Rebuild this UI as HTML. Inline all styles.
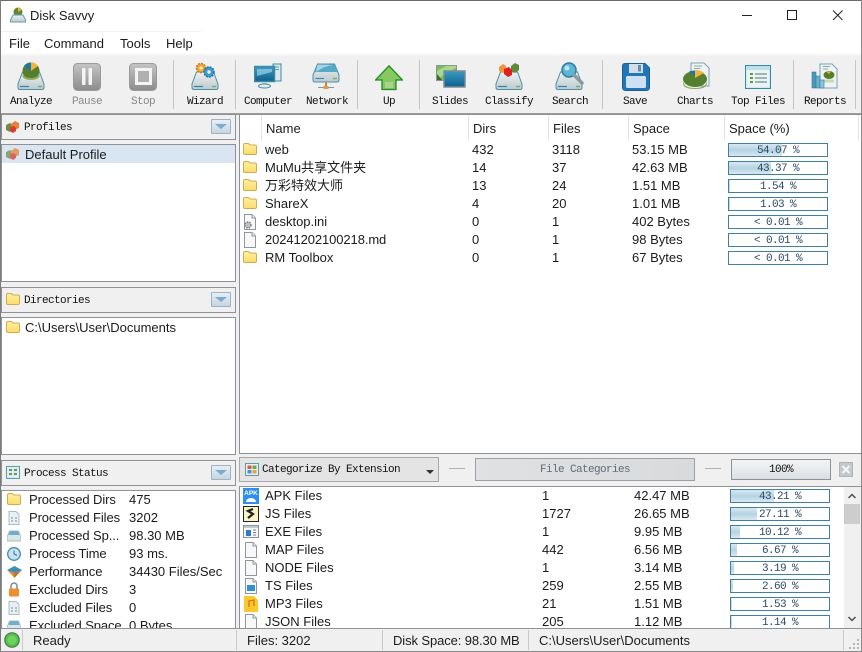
<!DOCTYPE html>
<html><head><meta charset="utf-8"><style>
html,body{margin:0;padding:0;width:862px;height:652px;overflow:hidden;background:#f0f0f0}
body{position:relative;font:13px/18px "Liberation Sans","Noto Sans CJK SC",sans-serif;color:#1b1b1b}
div,span,svg{position:absolute;box-sizing:border-box}
.t{white-space:nowrap}
.m{font-family:"Liberation Mono","IPAGothic",monospace;font-size:11px;letter-spacing:-.6px;white-space:nowrap;color:#111}
.tb{top:95px;width:80px;text-align:center;line-height:14px}
.dis{color:#888}
.sep{top:60px;width:1px;height:49px;background:#c6c6c6}
.box{background:#fff;border:1px solid #8e9296}
.hd{background:#f0f0f0;border:1px solid #8e9296}
.dd{width:20px;height:15px;border:1px solid #9db3c4;background:linear-gradient(#e8eef3,#c5d5e2);border-radius:1px}
.dd:after{content:"";position:absolute;left:3px;top:4px;border:6px solid transparent;border-top:5px solid #7dabd0;border-bottom:0}
.hs{top:115px;width:1px;height:26px;background:#e4e4e4}
.bar{width:100px;height:14px;border:1px solid #3f7f9f;background:#fff;overflow:hidden}
.bar i{position:absolute;left:0;top:0;bottom:0;background:linear-gradient(#d8e8f1,#b5d3e3 50%,#d8e8f1);display:block}
.bar b{position:absolute;left:0;right:0;top:1px;text-align:center;font:normal 11px/12px "Liberation Mono",monospace;letter-spacing:-.6px;color:#2c4a63}
.ss{top:630px;width:1px;height:20px;background:#c8c8c8}
.n{letter-spacing:-.1px}
</style></head><body>
<svg width="0" height="0" style="left:0;top:0">
<defs>
<linearGradient id="dg" x1="0" y1="0" x2="0" y2="1"><stop offset="0" stop-color="#eef2f3"/><stop offset="1" stop-color="#bcc9ce"/></linearGradient>
<linearGradient id="bl" x1="0" y1="0" x2="0" y2="1"><stop offset="0" stop-color="#3a9cc4"/><stop offset="1" stop-color="#0f5f8c"/></linearGradient>
<linearGradient id="gy" x1="0" y1="0" x2="0" y2="1"><stop offset="0" stop-color="#c4c4c4"/><stop offset="1" stop-color="#8c8c8c"/></linearGradient>
<linearGradient id="fg" x1="0" y1="0" x2="0" y2="1"><stop offset="0" stop-color="#fff0a0"/><stop offset="1" stop-color="#fbdc6c"/></linearGradient>
<symbol id="disk" viewBox="0 0 28 28"><path d="M5.500 10H22.500L27 22v3.500q0 2-2 2H3q-2 0-2-2V22Z" fill="url(#dg)" stroke="#4d8ea6"/><path d="M3 24.500H12" stroke="#2d87ad" stroke-width="1.200"/><path d="M21 24.500h4" stroke="#80b060" stroke-width="1.500"/></symbol>
<symbol id="fold" viewBox="0 0 14 12"><path d="M.5 2Q.5 .5 2 .5H5.500L7 2H12Q13.500 2 13.500 3.500V10Q13.500 11.500 12 11.500H2Q.5 11.500.5 10Z" fill="url(#fg)" stroke="#d4aa50"/></symbol>
<symbol id="page" viewBox="0 0 14 16"><path d="M1.500.500H9L12.500 4V15.500H1.500Z" fill="#f8f8f8" stroke="#8f979c"/><path d="M9 .5V4H12.500" fill="#e6e6e6" stroke="#8f979c"/></symbol>
<symbol id="cube" viewBox="0 0 16 14"><path d="M1 5L5 3L8 5V10L5 12L1 10Z" fill="#6d8f45"/><path d="M6 4L10 1L14 3V8L10 10L6 8Z" fill="#e8813a"/><path d="M5 7L9 6L11 8V11L8 13L5 11Z" fill="#d83a34"/></symbol>
</defs></svg>

<!-- window frame -->
<div style="left:0;top:0;width:862px;height:55px;background:#fff"></div>
<div style="left:0;top:0;width:862px;height:1px;background:#6a6a6a"></div>
<div style="left:0;top:0;width:1px;height:652px;background:#7a7a7a"></div>
<div style="left:861px;top:0;width:1px;height:652px;background:#8a8a8a"></div>
<div style="left:0;top:651px;width:862px;height:1px;background:#8a8a8a"></div>
<div style="left:1px;top:31px;width:200px;height:1px;background:#f0f0f0"></div>
<div style="left:1px;top:54px;width:860px;height:2px;background:#f4f4f4"></div>

<!-- title -->
<svg style="left:10px;top:7px" width="16" height="16" viewBox="0 0 16 16"><circle cx="8" cy="5" r="4.500" fill="#5c8a32"/><path d="M8 5V.8A4 4 0 0 1 11.500 3Z" fill="#f0b030"/><path d="M3 8H13L15.500 13V15H.5V13Z" fill="url(#dg)" stroke="#6b9bad"/></svg>
<div class="t" style="left:30px;top:7px">Disk Savvy</div>
<svg style="left:735px;top:5px" width="120" height="20" viewBox="0 0 120 20" fill="none" stroke="#222"><path d="M7 10.500H17"/><rect x="52.500" y="5.500" width="9" height="9"/><path d="M98 5.500L107.500 15M107.500 5.500L98 15"/></svg>

<!-- menu -->
<div class="t" style="left:9px;top:35px">File</div>
<div class="t" style="left:44px;top:35px">Command</div>
<div class="t" style="left:120px;top:35px">Tools</div>
<div class="t" style="left:166px;top:35px">Help</div>

<!-- toolbar -->
<div style="left:1px;top:113px;width:860px;height:2px;background:#9c9c9c"></div>
<div class="sep" style="left:173px"></div><div class="sep" style="left:235px"></div><div class="sep" style="left:357px"></div><div class="sep" style="left:419px"></div><div class="sep" style="left:602px"></div><div class="sep" style="left:793px"></div><div class="sep" style="left:855px"></div>

<svg style="left:17px;top:62px" width="28" height="28"><use href="#disk"/><circle cx="14" cy="9" r="8.500" fill="#557f2e"/><path d="M14 9L7 4A8.500 8.500 0 0 1 14 .5Z" fill="#1f77a8"/><path d="M14 9V.5A8.500 8.500 0 0 1 21 4Z" fill="#f4b33a"/><path d="M5.500 11a8.500 5 0 0 0 17 0v3a8.500 4 0 0 1-17 0Z" fill="#8fae5a"/></svg>
<svg style="left:73px;top:63px" width="28" height="28"><rect x=".5" y=".5" width="27" height="27" rx="4" fill="url(#gy)" stroke="#9a9a9a"/><rect x="9" y="5" width="3.500" height="17" rx="1" fill="#f4f4f4"/><rect x="15.500" y="5" width="3.500" height="17" rx="1" fill="#f4f4f4"/></svg>
<svg style="left:129px;top:63px" width="28" height="28"><rect x=".5" y=".5" width="27" height="27" rx="4" fill="url(#gy)" stroke="#9a9a9a"/><rect x="7.500" y="6.500" width="14" height="14" fill="#b0b0b0" stroke="#f4f4f4" stroke-width="3"/></svg>
<svg style="left:191px;top:62px" width="28" height="28"><use href="#disk"/><circle cx="10" cy="6" r="4.500" fill="#f4a630" stroke="#d07a10" stroke-width="1.500" stroke-dasharray="2 1"/><circle cx="10" cy="6" r="1.500" fill="#fff"/><circle cx="18" cy="10" r="5" fill="#3f9cc8" stroke="#1f6f9f" stroke-width="1.500" stroke-dasharray="2 1"/><circle cx="18" cy="10" r="1.700" fill="#e8f4fa"/></svg>
<svg style="left:254px;top:63px" width="28" height="26"><rect x="19" y="1" width="8" height="17" fill="#dce8ec" stroke="#3d8aa5"/><path d="M21 4h4M21 6.500h4" stroke="#5aa0b8"/><rect x=".5" y="3.500" width="20" height="15" fill="url(#bl)" stroke="#3d8aa5" stroke-width="1.500"/><path d="M3 6H18V9L3 13Z" fill="#9cd2e6" opacity=".7"/><path d="M8 19H13V22H8Z" fill="#b8d4dc"/><ellipse cx="10.500" cy="23" rx="6" ry="2" fill="#e3eef1" stroke="#3d8aa5"/></svg>
<svg style="left:312px;top:63px" width="28" height="28"><path d="M5.500 1H22.500L27 12V17Q27 19 25 19H3Q1 19 1 17V12Z" fill="url(#dg)" stroke="#4d8ea6"/><path d="M5.500 1.500H22.500L25.500 9H2.500Z" fill="#58a9c9"/><path d="M4 9Q12 3 21 2L5.500 1.500Z" fill="#a6d4e4"/><path d="M3.500 15.500H12" stroke="#2d87ad"/><path d="M21 15.500h4" stroke="#80b060" stroke-width="1.500"/><path d="M14 19V24" stroke="#d08830" stroke-width="2"/><path d="M6 24.500H22" stroke="#5aa0b8"/><rect x="11.500" y="23" width="5" height="3" fill="#e89a3a"/></svg>
<svg style="left:375px;top:65px" width="28" height="26"><path d="M14 .8L27.500 15H21V24.500H7V15H.5Z" fill="#86c862" stroke="#1f8a1f" stroke-width="1.300"/><rect x="10" y="17" width="8" height="6" fill="#a9d48c"/></svg>
<svg style="left:436px;top:65px" width="30" height="24"><rect x=".5" y=".5" width="20" height="15" fill="#7dbb5e" stroke="#8a9a8a"/><path d="M1 15L1 6L10 1H20V3L10 8Z" fill="#a8d88e"/><path d="M1 15V9l5 6Z" fill="#3f6b25"/><rect x="8" y="6" width="21" height="16" fill="url(#bl)" stroke="#7c8a94" stroke-width="1.500"/></svg>
<svg style="left:495px;top:62px" width="28" height="28"><use href="#disk"/><path d="M4 5L8 2L11 4V9L8 11L4 9Z" fill="#f0953e"/><path d="M16 4L20 1L24 3V8L20 11L16 9Z" fill="#5f8a3a"/><path d="M9 7L14 5L17 8V13L13 15L9 12Z" fill="#e02020"/></svg>
<svg style="left:555px;top:62px" width="30" height="28"><use href="#disk" width="28" height="28"/><circle cx="14" cy="8" r="7" fill="#5cb6d6" stroke="#2b7ea3" stroke-width="1.500"/><circle cx="12" cy="6" r="2.500" fill="#bfe4f1"/><path d="M19 13L27 21" stroke="#8a9aa3" stroke-width="3.500" stroke-linecap="round"/></svg>
<svg style="left:622px;top:63px" width="28" height="28"><path d="M3 .5H23L27.500 5V24Q27.500 27.500 24 27.500H4Q.5 27.500.5 24V3Q.5.5 3 .5Z" fill="#2176b8" stroke="#1a5f98"/><path d="M7 1H21V10H7Z" fill="#d3dfe8"/><rect x="16" y="2" width="3" height="6.500" fill="#5b8db5"/><rect x="4" y="13" width="20" height="12" rx="1.500" fill="#cfe0f4"/></svg>
<svg style="left:682px;top:62px" width="28" height="28"><path d="M9 1H22L27 6V24H9Z" fill="#eef3f5" stroke="#7ba2b3"/><path d="M12 4h8M12 6.500h6" stroke="#8aa" /><ellipse cx="13" cy="17" rx="12" ry="8" fill="#557f2e"/><path d="M1 18q0 8 12 8t12-8v3q0 6-12 6T1 21Z" fill="#8aa858"/><path d="M13 15L7 9.500Q10 8.500 13 8.500Z" fill="#1f77a8"/><path d="M13 16V8Q19 8 22 11Z" fill="#f4b33a"/></svg>
<svg style="left:745px;top:65px" width="26" height="24"><rect x=".5" y=".5" width="25" height="23" fill="#e9f4f4" stroke="#2f8da8" stroke-width="1.200"/><rect x="1" y="1" width="24" height="4" fill="#bfe0e8"/><path d="M5 9h3M5 13h3M5 17h3" stroke="#5d9a3a" stroke-width="2"/><path d="M10 9H22M10 13H22M10 17H22" stroke="#7d8a8f" stroke-width="1.300"/></svg>
<svg style="left:811px;top:63px" width="28" height="28"><path d="M9 1H21L26 6V25H9Z" fill="#eef3f5" stroke="#7ba2b3"/><path d="M12 3.500h7M12 6h5" stroke="#8aa"/><ellipse cx="18" cy="12" rx="5.500" ry="4" fill="#557f2e"/><path d="M18 11L15 8.500h5Z" fill="#f4b33a"/><path d="M12 18H23" stroke="#c8d8b0" stroke-width="3"/><rect x="1" y="9" width="4" height="16" fill="#4d97b8" stroke="#2f7a9b" stroke-width=".6"/><rect x="5" y="13" width="4" height="12" fill="#6fb0cc" stroke="#2f7a9b" stroke-width=".6"/><rect x="9" y="17" width="4" height="8" fill="#8fc4da" stroke="#2f7a9b" stroke-width=".6"/></svg>

<div class="m tb" style="left:-9px">Analyze</div>
<div class="m tb dis" style="left:47px">Pause</div>
<div class="m tb dis" style="left:103px">Stop</div>
<div class="m tb" style="left:165px">Wizard</div>
<div class="m tb" style="left:228px">Computer</div>
<div class="m tb" style="left:287px">Network</div>
<div class="m tb" style="left:349px">Up</div>
<div class="m tb" style="left:410px">Slides</div>
<div class="m tb" style="left:469px">Classify</div>
<div class="m tb" style="left:530px">Search</div>
<div class="m tb" style="left:595px">Save</div>
<div class="m tb" style="left:655px">Charts</div>
<div class="m tb" style="left:718px">Top Files</div>
<div class="m tb" style="left:785px">Reports</div>

<!-- left panels -->
<div class="hd" style="left:1px;top:114px;width:235px;height:26px"></div>
<svg style="left:5px;top:120px" width="16" height="14"><use href="#cube"/></svg>
<div class="m" style="left:24px;top:119px">Profiles</div>
<div class="dd" style="left:211px;top:119px"></div>
<div class="box" style="left:1px;top:144px;width:235px;height:138px"></div>
<div style="left:2px;top:145px;width:233px;height:18px;background:#d9e6f1"></div>
<svg style="left:5px;top:147px;opacity:.75" width="16" height="14"><use href="#cube"/></svg>
<div class="t" style="left:25px;top:146px">Default Profile</div>

<div class="hd" style="left:1px;top:287px;width:235px;height:26px"></div>
<svg style="left:6px;top:293px" width="14" height="12"><use href="#fold"/></svg>
<div class="m" style="left:24px;top:292px">Directories</div>
<div class="dd" style="left:211px;top:292px"></div>
<div class="box" style="left:1px;top:317px;width:235px;height:138px"></div>
<svg style="left:6px;top:321px" width="14" height="12"><use href="#fold"/></svg>
<div class="t" style="left:25px;top:319px">C:\Users\User\Documents</div>

<div class="hd" style="left:1px;top:460px;width:235px;height:26px"></div>
<svg style="left:6px;top:466px" width="14" height="13"><rect x=".5" y=".5" width="13" height="12" fill="#dfeef3" stroke="#5d9ab3"/><path d="M3 3h3v2H3zM8 3h3v2H8zM3 7h3v2H3zM8 7h3v2H8z" fill="#6b9a4a"/></svg>
<div class="m" style="left:24px;top:465px">Process Status</div>
<div class="dd" style="left:211px;top:465px"></div>
<div style="left:1px;top:490px;width:235px;height:139px;background:#fff;border:1px solid #8e9296;overflow:hidden">
<svg style="left:5px;top:2px" width="14" height="12"><use href="#fold"/></svg>
<svg style="left:6px;top:20px" width="12" height="14" viewBox="0 0 12 14"><path d="M1 .5H8L11 3.500V13.500H1Z" fill="#e8f0f4" stroke="#a8bcc8"/><path d="M3 7h2M7 7h2M3 10h2M7 10h2" stroke="#7b8c96"/></svg>
<svg style="left:5px;top:39px" width="14" height="12" viewBox="0 0 14 12"><path d="M2.500 1H11.500L14 7V11H0V7Z" fill="#dbe5e8" stroke="#8fb0bd" stroke-width=".7"/><path d="M3 1H11L12.500 5H1.500Z" fill="#6faec8"/></svg>
<svg style="left:5px;top:56px" width="14" height="14"><circle cx="7" cy="7" r="6.300" fill="#c8e2ef" stroke="#3f8ab0" stroke-width="1.300"/><path d="M7 3.500V7L10 8.500" stroke="#2f6f96" fill="none"/></svg>
<svg style="left:5px;top:75px" width="15" height="12" viewBox="0 0 15 12"><path d="M0 4L7.500 0L15 4L7.500 7Z" fill="#3a8fb5"/><path d="M0 4L7.500 7V12L4 8Z" fill="#e8862e"/><path d="M15 4L7.500 7V12L11 8Z" fill="#c96a1c"/></svg>
<svg style="left:6px;top:91px" width="12" height="15" viewBox="0 0 12 15"><path d="M3 7V4a3 3 0 0 1 6 0V7" fill="none" stroke="#7a8a94" stroke-width="1.500"/><rect x="1" y="6.500" width="10" height="8" rx="1" fill="#ef8e2d"/></svg>
<svg style="left:6px;top:110px" width="12" height="14" viewBox="0 0 12 14"><path d="M1 .5H8L11 3.500V13.500H1Z" fill="#e8f0f4" stroke="#a8bcc8"/><path d="M3 7h2M7 7h2M3 10h2M7 10h2" stroke="#7b8c96"/></svg>
<svg style="left:5px;top:129px" width="14" height="12" viewBox="0 0 14 12"><path d="M2.500 1H11.500L14 7V11H0V7Z" fill="#dbe5e8" stroke="#8fb0bd" stroke-width=".7"/><path d="M3 1H11L12.500 5H1.500Z" fill="#6faec8"/></svg>
<div class="t n" style="left:27px;top:0">Processed Dirs</div><div class="t" style="left:127px;top:0">475</div>
<div class="t n" style="left:27px;top:18px">Processed Files</div><div class="t" style="left:127px;top:18px">3202</div>
<div class="t n" style="left:27px;top:36px">Processed Sp...</div><div class="t" style="left:127px;top:36px">98.30 MB</div>
<div class="t n" style="left:27px;top:54px">Process Time</div><div class="t" style="left:127px;top:54px">93 ms.</div>
<div class="t n" style="left:27px;top:72px">Performance</div><div class="t" style="left:127px;top:72px">34430 Files/Sec</div>
<div class="t n" style="left:27px;top:90px">Excluded Dirs</div><div class="t" style="left:127px;top:90px">3</div>
<div class="t n" style="left:27px;top:108px">Excluded Files</div><div class="t" style="left:127px;top:108px">0</div>
<div class="t n" style="left:27px;top:126px">Excluded Space</div><div class="t" style="left:127px;top:126px">0 Bytes</div>
</div>

<!-- top list -->
<div class="box" style="left:239px;top:114px;width:622px;height:340px;border-right:0"></div>
<div class="hs" style="left:261px"></div><div class="hs" style="left:468px"></div><div class="hs" style="left:548px"></div><div class="hs" style="left:628px"></div><div class="hs" style="left:724px"></div><div class="hs" style="left:858px"></div>
<div class="t" style="left:266px;top:120px">Name</div><div class="t" style="left:473px;top:120px">Dirs</div><div class="t" style="left:553px;top:120px">Files</div><div class="t" style="left:633px;top:120px">Space</div><div class="t" style="left:729px;top:120px">Space (%)</div>

<svg style="left:243px;top:143px" width="14" height="12"><use href="#fold"/></svg>
<svg style="left:243px;top:161px" width="14" height="12"><use href="#fold"/></svg>
<svg style="left:243px;top:179px" width="14" height="12"><use href="#fold"/></svg>
<svg style="left:243px;top:197px" width="14" height="12"><use href="#fold"/></svg>
<svg style="left:243px;top:214px" width="14" height="16"><use href="#page"/><circle cx="5" cy="11" r="3" fill="#c0c0c0" stroke="#808080" stroke-width="1.500" stroke-dasharray="1.500 1"/></svg>
<svg style="left:243px;top:232px" width="14" height="16"><use href="#page"/></svg>
<svg style="left:243px;top:251px" width="14" height="12"><use href="#fold"/></svg>

<div class="t" style="left:265px;top:141px">web</div><div class="t" style="left:472px;top:141px">432</div><div class="t" style="left:552px;top:141px">3118</div><div class="t" style="left:632px;top:141px">53.15 MB</div>
<div class="t" style="left:265px;top:159px">MuMu共享文件夹</div><div class="t" style="left:472px;top:159px">14</div><div class="t" style="left:552px;top:159px">37</div><div class="t" style="left:632px;top:159px">42.63 MB</div>
<div class="t" style="left:265px;top:177px">万彩特效大师</div><div class="t" style="left:472px;top:177px">13</div><div class="t" style="left:552px;top:177px">24</div><div class="t" style="left:632px;top:177px">1.51 MB</div>
<div class="t" style="left:265px;top:195px">ShareX</div><div class="t" style="left:472px;top:195px">4</div><div class="t" style="left:552px;top:195px">20</div><div class="t" style="left:632px;top:195px">1.01 MB</div>
<div class="t" style="left:265px;top:213px">desktop.ini</div><div class="t" style="left:472px;top:213px">0</div><div class="t" style="left:552px;top:213px">1</div><div class="t" style="left:632px;top:213px">402 Bytes</div>
<div class="t n" style="left:265px;top:231px">20241202100218.md</div><div class="t" style="left:472px;top:231px">0</div><div class="t" style="left:552px;top:231px">1</div><div class="t" style="left:632px;top:231px">98 Bytes</div>
<div class="t" style="left:265px;top:249px">RM Toolbox</div><div class="t" style="left:472px;top:249px">0</div><div class="t" style="left:552px;top:249px">1</div><div class="t" style="left:632px;top:249px">67 Bytes</div>

<div class="bar" style="left:728px;top:143px"><i style="width:53px"></i><b>54.07 %</b></div>
<div class="bar" style="left:728px;top:161px"><i style="width:42px"></i><b>43.37 %</b></div>
<div class="bar" style="left:728px;top:179px"><i style="width:1px"></i><b>1.54 %</b></div>
<div class="bar" style="left:728px;top:197px"><i style="width:1px"></i><b>1.03 %</b></div>
<div class="bar" style="left:728px;top:215px"><b>&lt; 0.01 %</b></div>
<div class="bar" style="left:728px;top:233px"><b>&lt; 0.01 %</b></div>
<div class="bar" style="left:728px;top:251px"><b>&lt; 0.01 %</b></div>

<!-- category bar -->
<div style="left:239px;top:457px;width:200px;height:25px;background:#e4e4e4;border:1px solid #a8a8a8"></div>
<svg style="left:245px;top:463px" width="14" height="13"><rect x=".5" y=".5" width="13" height="12" fill="#e8f0f4" stroke="#5d9ab3"/><rect x="2.500" y="2.500" width="4" height="3.500" fill="#d85a4a"/><rect x="7.500" y="2.500" width="4" height="3.500" fill="#6fa850"/><rect x="2.500" y="7" width="4" height="3.500" fill="#5090c8"/><rect x="7.500" y="7" width="4" height="3.500" fill="#e8a040"/></svg>
<div class="m" style="left:262px;top:461px">Categorize By Extension</div>
<div style="left:426px;top:470px;border:4px solid transparent;border-top:4px solid #333;border-bottom:0"></div>
<div style="left:449px;top:468px;width:16px;height:1px;background:#b0b0b0"></div>
<div style="left:475px;top:458px;width:220px;height:23px;background:linear-gradient(90deg,#dfe1e3,#d8dadc);border:1px solid #9aa0a6"></div>
<div class="m" style="left:475px;top:461px;width:220px;text-align:center;color:#5f6d78">File Categories</div>
<div style="left:705px;top:468px;width:16px;height:1px;background:#b0b0b0"></div>
<div style="left:731px;top:459px;width:100px;height:21px;background:linear-gradient(#f3f4f5,#dcdfe2);border:1px solid #8e9296"></div>
<div class="m" style="left:731px;top:461px;width:100px;text-align:center">100%</div>
<svg style="left:839px;top:462px" width="14" height="15"><rect x=".5" y=".5" width="13" height="14" fill="#c4c8ca" stroke="#b0b4b6"/><path d="M3.500 4L10.500 11M10.500 4L3.500 11" stroke="#f4f4f4" stroke-width="2"/></svg>

<!-- bottom list -->
<div class="box" style="left:239px;top:486px;width:622px;height:143px;border-right:0;overflow:hidden"></div>
<svg style="left:243px;top:488px" width="16" height="16"><rect width="16" height="16" fill="#2f8fef"/><text x="8" y="7" font-family="Liberation Sans" font-size="6.500" font-weight="bold" fill="#fff" text-anchor="middle">APK</text><path d="M3 14a5 4 0 0 1 10 0Z" fill="#fff"/></svg>
<svg style="left:243px;top:506px" width="16" height="16"><rect x=".5" y=".5" width="15" height="15" fill="#f8f4c8" stroke="#222"/><path d="M10 3L5 5L10 8L5 12" fill="none" stroke="#222" stroke-width="2.200"/></svg>
<svg style="left:243px;top:525px" width="16" height="13"><rect x=".5" y=".5" width="15" height="12" fill="#f4f6f8" stroke="#8a9298"/><rect x="1" y="1" width="14" height="2" fill="#c0c8d0"/><rect x="3" y="5" width="5" height="6" fill="#2f78c8"/><path d="M10 5h3M10 7.500h3M10 10h3" stroke="#7a8288"/></svg>
<svg style="left:244px;top:542px" width="14" height="16"><use href="#page"/></svg>
<svg style="left:244px;top:560px" width="14" height="16"><use href="#page"/></svg>
<svg style="left:244px;top:578px" width="14" height="16"><use href="#page"/><rect x="3" y="7" width="8" height="6" fill="#2f8fd8"/></svg>
<svg style="left:244px;top:596px" width="14" height="16"><path d="M0 0H10L14 4V16H0Z" fill="#fcc92c"/><path d="M5 11V5L10 4V10" fill="none" stroke="#c8781c" stroke-width="1.300"/></svg>
<svg style="left:244px;top:614px" width="14" height="14"><use href="#page" height="16" width="14"/></svg>

<div class="t" style="left:265px;top:487px">APK Files</div><div class="t" style="left:542px;top:487px">1</div><div class="t" style="left:634px;top:487px">42.47 MB</div>
<div class="t" style="left:265px;top:505px">JS Files</div><div class="t" style="left:542px;top:505px">1727</div><div class="t" style="left:634px;top:505px">26.65 MB</div>
<div class="t" style="left:265px;top:523px">EXE Files</div><div class="t" style="left:542px;top:523px">1</div><div class="t" style="left:634px;top:523px">9.95 MB</div>
<div class="t" style="left:265px;top:541px">MAP Files</div><div class="t" style="left:542px;top:541px">442</div><div class="t" style="left:634px;top:541px">6.56 MB</div>
<div class="t" style="left:265px;top:559px">NODE Files</div><div class="t" style="left:542px;top:559px">1</div><div class="t" style="left:634px;top:559px">3.14 MB</div>
<div class="t" style="left:265px;top:577px">TS Files</div><div class="t" style="left:542px;top:577px">259</div><div class="t" style="left:634px;top:577px">2.55 MB</div>
<div class="t" style="left:265px;top:595px">MP3 Files</div><div class="t" style="left:542px;top:595px">21</div><div class="t" style="left:634px;top:595px">1.51 MB</div>
<div class="t" style="left:265px;top:613px">JSON Files</div><div class="t" style="left:542px;top:613px">205</div><div class="t" style="left:634px;top:613px">1.12 MB</div>

<div class="bar" style="left:730px;top:489px"><i style="width:43px"></i><b>43.21 %</b></div>
<div class="bar" style="left:730px;top:507px"><i style="width:26px"></i><b>27.11 %</b></div>
<div class="bar" style="left:730px;top:525px"><i style="width:9px"></i><b>10.12 %</b></div>
<div class="bar" style="left:730px;top:543px"><i style="width:6px"></i><b>6.67 %</b></div>
<div class="bar" style="left:730px;top:561px"><i style="width:3px"></i><b>3.19 %</b></div>
<div class="bar" style="left:730px;top:579px"><i style="width:2px"></i><b>2.60 %</b></div>
<div class="bar" style="left:730px;top:597px"><i style="width:1px"></i><b>1.53 %</b></div>
<div class="bar" style="left:730px;top:615px"><i style="width:1px"></i><b>1.14 %</b></div>

<div style="left:844px;top:487px;width:17px;height:141px;background:#f0f0f0"></div>
<div style="left:844px;top:504px;width:16px;height:20px;background:#cdcdcd"></div>
<svg style="left:844px;top:487px" width="16" height="141" fill="none" stroke="#505050" stroke-width="1.500"><path d="M4.500 11L8 7.500L11.500 11"/><path d="M4.500 130L8 133.500L11.500 130"/></svg>

<!-- status bar -->
<div style="left:1px;top:628px;width:860px;height:23px;background:#f0f0f0;border-top:1px solid #8e9296"></div>
<svg style="left:4px;top:632px" width="16" height="16"><circle cx="8" cy="8" r="7.200" fill="#57c24a" stroke="#3f7a50" stroke-width="1.200"/><circle cx="8" cy="8" r="4.500" fill="#6fd35f"/></svg>
<div class="ss" style="left:22px"></div><div class="ss" style="left:236px"></div><div class="ss" style="left:382px"></div><div class="ss" style="left:528px"></div><div class="ss" style="left:843px"></div>
<div class="t" style="left:33px;top:632px">Ready</div>
<div class="t" style="left:247px;top:632px">Files: 3202</div>
<div class="t n" style="left:393px;top:632px">Disk Space: 98.30 MB</div>
<div class="t" style="left:539px;top:632px">C:\Users\User\Documents</div>
<svg style="left:849px;top:639px" width="11" height="11" fill="#b4b4b4"><rect x="8" y="0" width="2" height="2"/><rect x="4" y="4" width="2" height="2"/><rect x="8" y="4" width="2" height="2"/><rect x="0" y="8" width="2" height="2"/><rect x="4" y="8" width="2" height="2"/><rect x="8" y="8" width="2" height="2"/></svg>
</body></html>
